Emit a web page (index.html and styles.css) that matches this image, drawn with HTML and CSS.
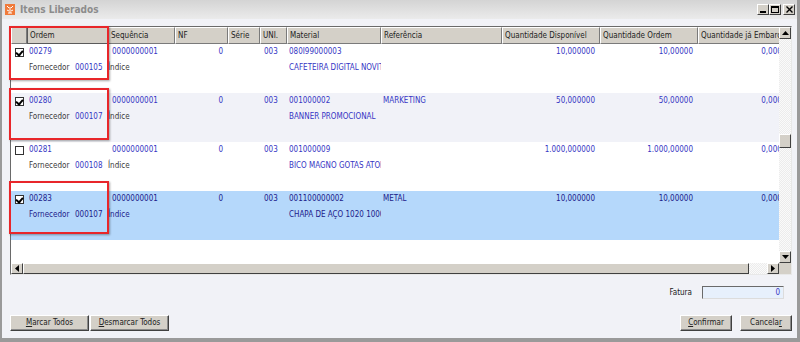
FILE: index.html
```html
<!DOCTYPE html>
<html lang="pt-BR">
<head>
  <meta charset="UTF-8" />
  <title>Itens Liberados</title>
  <link rel="stylesheet" href="styles.css">
</head>
<body>
  <div class="window">
    <div class="titlebar">
      <svg class="app-icon" width="10" height="11" viewBox="0 0 10 11">
        <rect x="0" y="0" width="10" height="11" fill="#f07a3a"/>
        <path d="M2 2 L4 4 M8 2 L6 4 M5 3 V9 M2 6 L4 7 M8 6 L6 7 M3 9 H7" stroke="#fff" stroke-width="1" fill="none"/>
      </svg>
      <span class="title">Itens Liberados</span>
      <div class="win-btns">
        <span class="wbtn"><svg width="7" height="7" viewBox="0 0 7 7"><rect x="0" y="5" width="6" height="2" fill="#000"/></svg></span>
        <span class="wbtn"><svg width="8" height="7" viewBox="0 0 8 7"><rect x="0.5" y="0.5" width="7" height="6" fill="none" stroke="#000"/><rect x="0" y="0" width="8" height="2" fill="#000"/></svg></span>
        <span class="wbtn close"><svg width="7" height="7" viewBox="0 0 7 7"><path d="M0.5 0.5 L6.5 6.5 M6.5 0.5 L0.5 6.5" stroke="#000" stroke-width="1.4"/></svg></span>
      </div>
    </div>

    <div class="client">
      <div class="grid">
        <div class="grid-main">
          <div class="grid-view">
            <div class="hdr">
              <div class="hcell"></div>
              <div class="hcell sorted">Ordem</div>
              <div class="hcell">Sequência</div>
              <div class="hcell">NF</div>
              <div class="hcell">Série</div>
              <div class="hcell">UNI.</div>
              <div class="hcell">Material</div>
              <div class="hcell">Referência</div>
              <div class="hcell">Quantidade Disponível</div>
              <div class="hcell">Quantidade Ordem</div>
              <div class="hcell">Quantidade já Embarcada</div>
            </div>

            <div class="row">
              <div class="cell chk-cell"><span class="chk on"></span></div>
              <div class="cell ordem"><div>00279</div><div><span class="lbl">Fornecedor</span>000105</div></div>
              <div class="cell seq"><div class="pad">0000000001</div><div class="lbl">Índice</div></div>
              <div class="cell num">0</div>
              <div class="cell"></div>
              <div class="cell uni">003</div>
              <div class="cell mat"><div>080I99000003</div><div>CAFETEIRA DIGITAL NOVITA</div></div>
              <div class="cell ref"></div>
              <div class="cell num">10,000000</div>
              <div class="cell num">10,00000</div>
              <div class="cell num">0,00000</div>
            </div>

            <div class="row alt">
              <div class="cell chk-cell"><span class="chk on"></span></div>
              <div class="cell ordem"><div>00280</div><div><span class="lbl">Fornecedor</span>000107</div></div>
              <div class="cell seq"><div class="pad">0000000001</div><div class="lbl">Índice</div></div>
              <div class="cell num">0</div>
              <div class="cell"></div>
              <div class="cell uni">003</div>
              <div class="cell mat"><div>001000002</div><div>BANNER PROMOCIONAL</div></div>
              <div class="cell ref">MARKETING</div>
              <div class="cell num">50,000000</div>
              <div class="cell num">50,00000</div>
              <div class="cell num">0,00000</div>
            </div>

            <div class="row">
              <div class="cell chk-cell"><span class="chk"></span></div>
              <div class="cell ordem"><div>00281</div><div><span class="lbl">Fornecedor</span>000108</div></div>
              <div class="cell seq"><div class="pad">0000000001</div><div class="lbl">Índice</div></div>
              <div class="cell num">0</div>
              <div class="cell"></div>
              <div class="cell uni">003</div>
              <div class="cell mat"><div>001000009</div><div>BICO MAGNO GOTAS ATOMIZADOR</div></div>
              <div class="cell ref"></div>
              <div class="cell num">1.000,000000</div>
              <div class="cell num">1.000,00000</div>
              <div class="cell num">0,00000</div>
            </div>

            <div class="row selected">
              <div class="cell chk-cell"><span class="chk on"></span></div>
              <div class="cell ordem"><div>00283</div><div><span class="lbl">Fornecedor</span>000107</div></div>
              <div class="cell seq"><div class="pad">0000000001</div><div class="lbl">Índice</div></div>
              <div class="cell num">0</div>
              <div class="cell"></div>
              <div class="cell uni">003</div>
              <div class="cell mat"><div>001100000002</div><div>CHAPA DE AÇO 1020 1000</div></div>
              <div class="cell ref">METAL</div>
              <div class="cell num">10,000000</div>
              <div class="cell num">10,00000</div>
              <div class="cell num">0,00000</div>
            </div>
          </div>

          <div class="vscroll">
            <span class="sbtn"><svg width="7" height="4" viewBox="0 0 7 4"><path d="M0 4 L3.5 0 L7 4 Z" fill="#000"/></svg></span>
            <div class="vtrack"><span class="vthumb"></span></div>
            <span class="sbtn"><svg width="7" height="4" viewBox="0 0 7 4"><path d="M0 0 L3.5 4 L7 0 Z" fill="#000"/></svg></span>
          </div>
        </div>

        <div class="hscroll">
          <span class="sbtn"><svg width="4" height="7" viewBox="0 0 4 7"><path d="M4 0 L0 3.5 L4 7 Z" fill="#000"/></svg></span>
          <span class="hthumb"></span>
          <span class="htrack"></span>
          <span class="sbtn"><svg width="4" height="7" viewBox="0 0 4 7"><path d="M0 0 L4 3.5 L0 7 Z" fill="#000"/></svg></span>
          <span class="corner"></span>
        </div>
      </div>

      <div class="fatura-line">
        <span class="fatura-lbl">Fatura</span>
        <span class="fatura-input">0</span>
      </div>

      <div class="actions">
        <div class="group">
          <span class="btn wide"><u>M</u>arcar Todos</span>
          <span class="btn wide"><u>D</u>esmarcar Todos</span>
        </div>
        <div class="group">
          <span class="btn"><u>C</u>onfirmar</span>
          <span class="btn">Cancela<u>r</u></span>
        </div>
      </div>
    </div>

    <span class="mark m1"></span>
    <span class="mark m2"></span>
    <span class="mark m3"></span>
  </div>
</body>
</html>
```

FILE: styles.css
```css
* {
  box-sizing: border-box;
}
body {
  margin: 0;
  font-family: 'DejaVu Sans Condensed', 'Liberation Sans', sans-serif;
  font-size: 8px;
  color: #222;
  background: #f0f1f6;
}
.window {
  position: relative;
  width: 800px;
  height: 342px;
  border-left: 2px solid #9a9a9a;
  border-right: 3px solid #9a9a9a;
  border-bottom: 4px solid #9a9a9a;
  background: #f1f2f7;
  overflow: hidden;
}
.titlebar {
  height: 19px;
  display: flex;
  align-items: center;
  padding-left: 3px;
  background: linear-gradient(#d4d4d4, #ebebeb);
}
.app-icon {
  margin-right: 5px;
}
.title {
  font-weight: bold;
  font-size: 10px;
  color: #8c8c8c;
  flex: 1;
}
.win-btns {
  display: flex;
  margin-right: 2px;
}
.wbtn {
  width: 12px;
  height: 11px;
  display: flex;
  align-items: center;
  justify-content: center;
  background: #d4d0c8;
  border: 1px solid;
  border-color: #fff #404040 #404040 #fff;
}
.wbtn.close {
  margin-left: 2px;
}

.client {
  padding: 7px 0 0 8px;
}
.grid {
  width: 782px;
  border: 1px solid;
  border-color: #6a6a6a #e8e8e8 #e8e8e8 #6a6a6a;
  background: #fff;
}
.grid-main {
  display: flex;
  height: 236px;
}
.grid-view {
  width: 768px;
  overflow: hidden;
}
.hdr, .row {
  display: grid;
  grid-template-columns: 16px 81px 67px 53px 32px 27px 94px 121px 98px 98px 98px;
  width: 785px;
}
.hdr {
  height: 17px;
  background: #d4d0c8;
}
.hcell {
  border-top: 1px solid #fff;
  border-left: 1px solid #fff;
  border-right: 1px solid #7a7a7a;
  border-bottom: 1px solid #7a7a7a;
  padding-left: 2px;
  line-height: 15px;
  white-space: nowrap;
  overflow: hidden;
}
.hcell.sorted {
  border: 1px solid #5a5a5a;
}
.row {
  height: 49px;
  line-height: 16px;
  color: #3636c4;
  background: #fff;
}
.row.alt {
  background: #f1f2f8;
}
.row.selected {
  background: #b5d8fb;
  color: #20208a;
}
.cell {
  white-space: nowrap;
  overflow: hidden;
}
.chk-cell {
  padding: 4px 0 0 4px;
}
.chk {
  display: block;
  width: 9px;
  height: 9px;
  border: 1px solid #333;
  background: #fff;
  position: relative;
}
.chk.on::after {
  content: "";
  position: absolute;
  left: 1px;
  top: 0;
  width: 3px;
  height: 5px;
  border-right: 2px solid #000;
  border-bottom: 2px solid #000;
  transform: rotate(40deg);
}
.ordem {
  padding-left: 2px;
}
.lbl {
  color: #3a3a3a;
}
.selected .lbl {
  color: #20208a;
}
.ordem .lbl {
  display: inline-block;
  width: 46px;
}
.seq .pad {
  padding-left: 4px;
}
.num {
  text-align: right;
  padding-right: 5px;
}
.uni {
  padding-left: 4px;
}
.mat, .ref {
  padding-left: 2px;
}

.vscroll {
  width: 12px;
  display: flex;
  flex-direction: column;
  background: #d4d0c8;
}
.sbtn {
  width: 12px;
  height: 12px;
  flex: none;
  display: flex;
  align-items: center;
  justify-content: center;
  background: #d4d0c8;
  border: 1px solid;
  border-color: #fff #404040 #404040 #fff;
}
.vtrack {
  flex: 1;
  padding-top: 95px;
  background: repeating-conic-gradient(#ececec 0 25%, #fafafa 0 50%) 0 0 / 2px 2px;
}
.vthumb {
  display: block;
  height: 14px;
  background: #d4d0c8;
  border: 1px solid;
  border-color: #fff #404040 #404040 #fff;
}
.hscroll {
  display: flex;
  height: 11px;
}
.hscroll .sbtn {
  height: 11px;
}
.hthumb {
  width: 726px;
  background: #d4d0c8;
  border: 1px solid;
  border-color: #fff #404040 #404040 #fff;
}
.htrack {
  flex: 1;
  background: repeating-conic-gradient(#ececec 0 25%, #fafafa 0 50%) 0 0 / 2px 2px;
}
.hscroll .corner {
  width: 12px;
  background: #d4d0c8;
}

.fatura-line {
  display: flex;
  justify-content: flex-end;
  align-items: center;
  margin-top: 11px;
  width: 774px;
  height: 13px;
}
.fatura-lbl {
  margin-right: 10px;
}
.fatura-input {
  width: 82px;
  height: 13px;
  line-height: 11px;
  text-align: right;
  padding-right: 3px;
  color: #3636c4;
  background: #e7f0fc;
  border: 1px solid;
  border-color: #6a6a6a #dcdcdc #dcdcdc #6a6a6a;
}

.actions {
  display: flex;
  justify-content: space-between;
  margin-top: 16px;
  width: 782px;
}
.group {
  display: flex;
  gap: 8px;
}
.group:first-child {
  gap: 1px;
}
.btn {
  width: 52px;
  height: 16px;
  line-height: 14px;
  text-align: center;
  background: #d4d0c8;
  color: #222;
  border: 1px solid;
  border-color: #fff #404040 #404040 #fff;
  box-shadow: inset -1px -1px 0 #8a8a8a;
}
.btn.wide {
  width: 79px;
}

.mark {
  position: absolute;
  width: 100px;
  border: 2px solid #e8262a;
  box-shadow: 1px 1px 2px rgba(0,0,0,0.35);
}
.m1 { left: 7px; top: 26px; height: 54px; }
.m2 { left: 7px; top: 88px; height: 52px; }
.m3 { left: 7px; top: 181px; height: 53px; }
```
